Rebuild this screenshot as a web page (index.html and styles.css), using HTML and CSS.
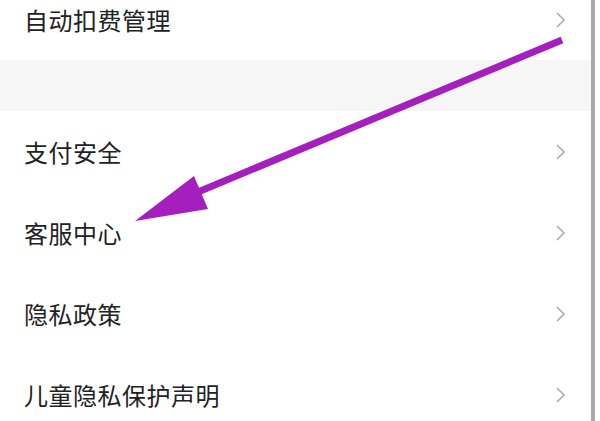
FILE: index.html
```html
<!DOCTYPE html>
<html lang="zh-CN">

<head>
    <meta charset="UTF-8">
    <meta name="viewport" content="width=device-width, initial-scale=1.0">
    <title>设置</title>
    <link rel="stylesheet" href="styles.css">
</head>

<body>
    <div class="page">
        <div class="list">
            <div class="row">
                <span class="label">自动扣费管理</span>
                <svg class="chevron" width="10" height="16" viewBox="0 0 10 16"><polyline points="1,1 8,8 1,15" /></svg>
            </div>
            <div class="gap"></div>
            <div class="row">
                <span class="label">支付安全</span>
                <svg class="chevron" width="10" height="16" viewBox="0 0 10 16"><polyline points="1,1 8,8 1,15" /></svg>
            </div>
            <div class="row">
                <span class="label">客服中心</span>
                <svg class="chevron" width="10" height="16" viewBox="0 0 10 16"><polyline points="1,1 8,8 1,15" /></svg>
            </div>
            <div class="row">
                <span class="label">隐私政策</span>
                <svg class="chevron" width="10" height="16" viewBox="0 0 10 16"><polyline points="1,1 8,8 1,15" /></svg>
            </div>
            <div class="row">
                <span class="label">儿童隐私保护声明</span>
                <svg class="chevron" width="10" height="16" viewBox="0 0 10 16"><polyline points="1,1 8,8 1,15" /></svg>
            </div>
        </div>
        <div class="edge"></div>

        <!-- 标注箭头 -->
        <svg class="arrow" width="600" height="421" viewBox="0 0 600 421">
            <line x1="562" y1="40" x2="198" y2="192" />
            <polygon points="135,221 194,176 208,209" />
        </svg>
    </div>
</body>

</html>
```

FILE: styles.css
```css
html, body {
    margin: 0;
    padding: 0;
    background: #fff;
}

.page {
    position: relative;
    display: flex;
    width: 600px;
    height: 421px;
    overflow: hidden;
    font-family: "Noto Sans CJK SC", "Noto Sans", sans-serif;
}

.list {
    width: 591px;
    margin-top: -21px;
}

.row {
    display: flex;
    align-items: center;
    justify-content: space-between;
    height: 81px;
    padding: 0 25px 0 24px;
    background: #fff;
}

.label {
    font-size: 24px;
    color: #222;
    letter-spacing: 0.5px;
}

.chevron {
    fill: none;
    stroke: #adadad;
    stroke-width: 1.6;
}

.gap {
    height: 51px;
    background: #f6f6f6;
}

.edge {
    width: 4px;
    background: #a9a9a9;
}

.arrow {
    position: absolute;
    left: 0;
    top: 0;
}

.arrow line {
    stroke: #a51fbf;
    stroke-width: 7;
}

.arrow polygon {
    fill: #a51fbf;
}
```
